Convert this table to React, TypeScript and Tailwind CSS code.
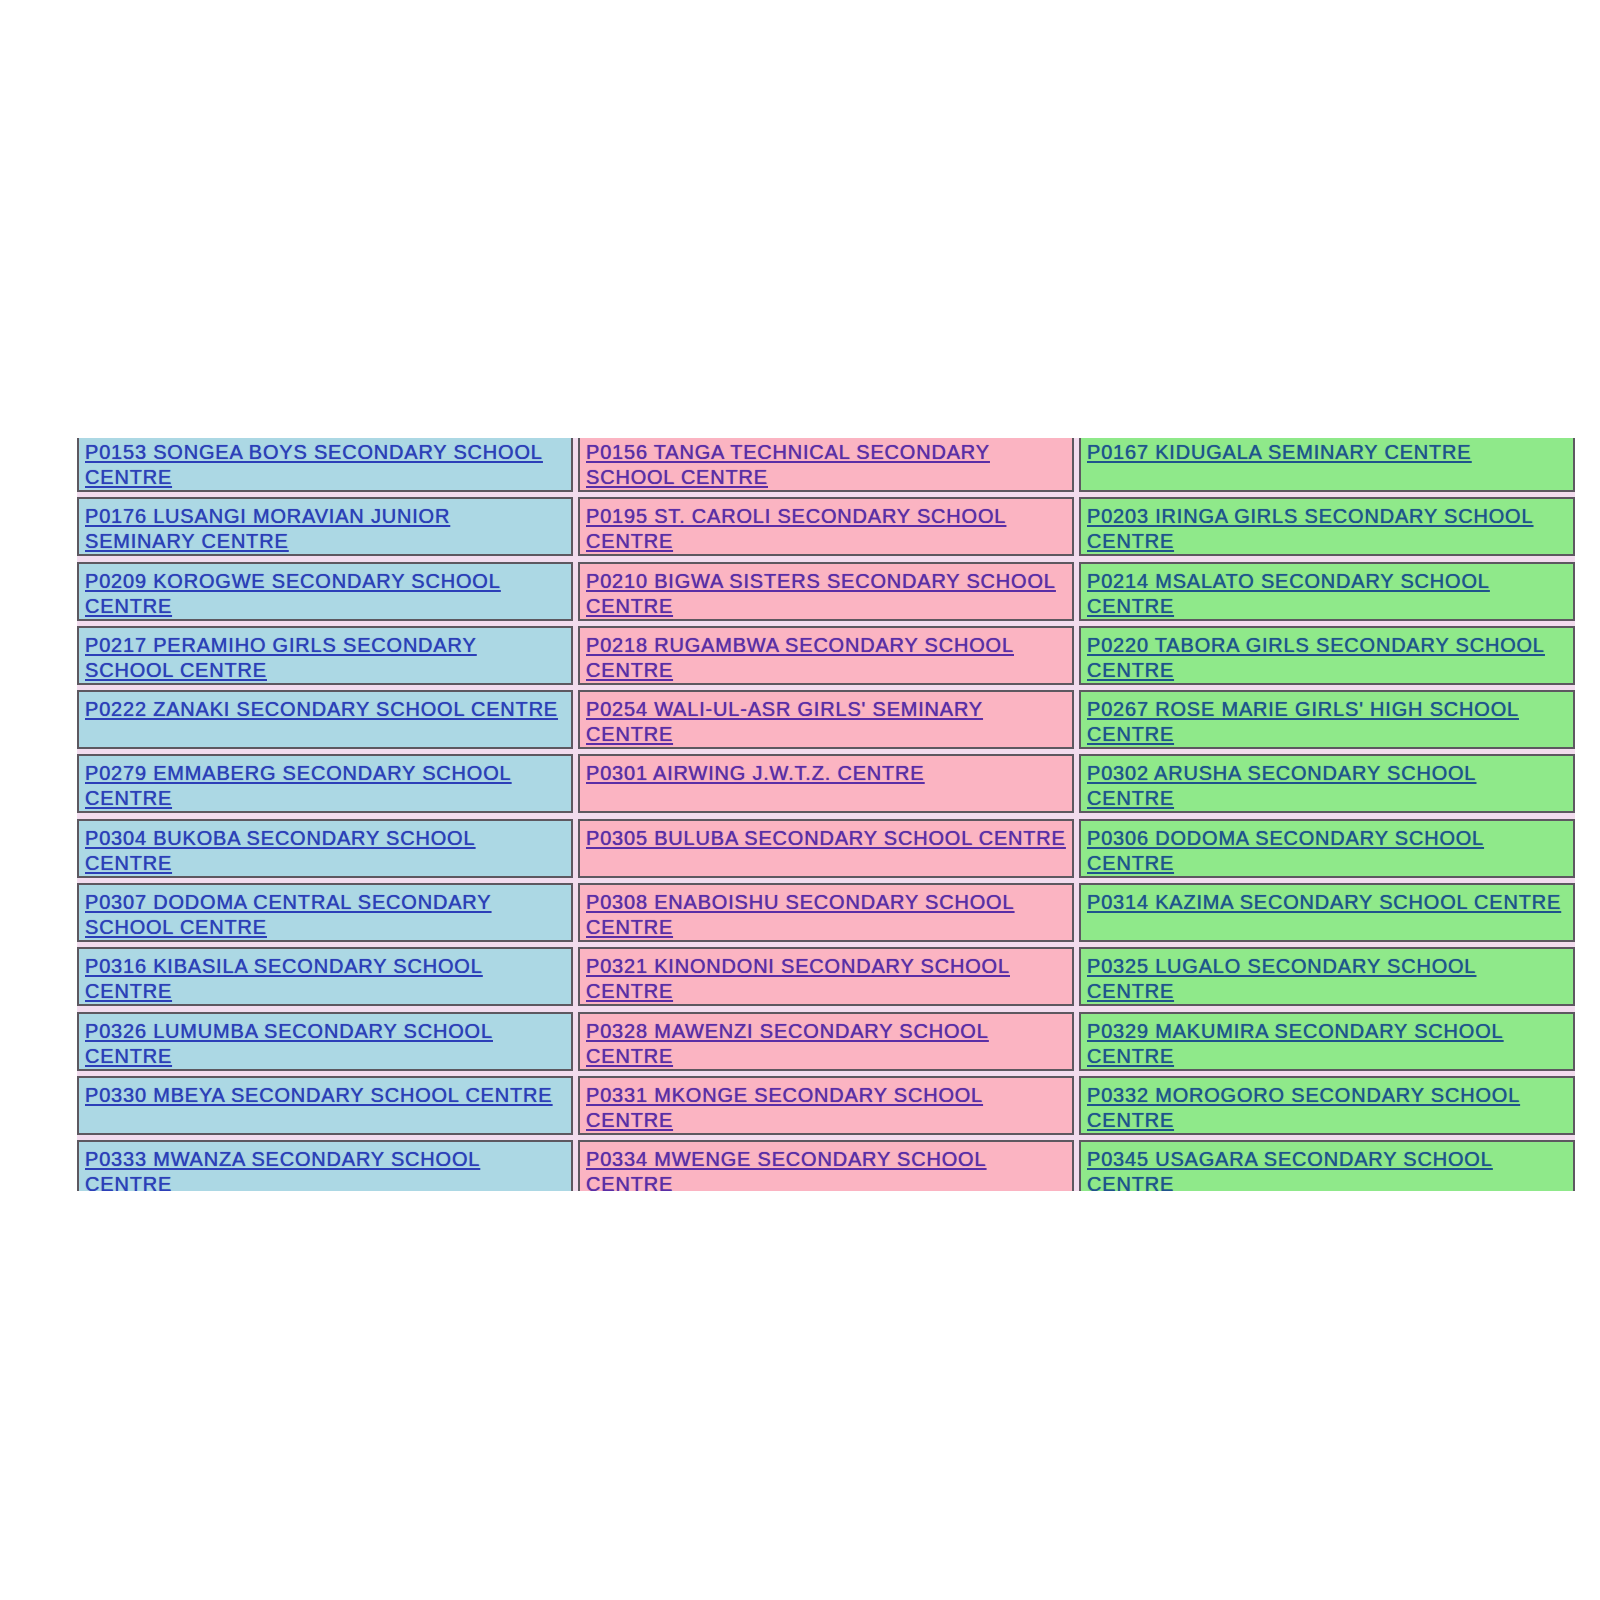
const rows: string[][][] = [
  [["P0153 SONGEA BOYS SECONDARY SCHOOL", "CENTRE"], ["P0156 TANGA TECHNICAL SECONDARY", "SCHOOL CENTRE"], ["P0167 KIDUGALA SEMINARY CENTRE"]],
  [["P0176 LUSANGI MORAVIAN JUNIOR", "SEMINARY CENTRE"], ["P0195 ST. CAROLI SECONDARY SCHOOL", "CENTRE"], ["P0203 IRINGA GIRLS SECONDARY SCHOOL", "CENTRE"]],
  [["P0209 KOROGWE SECONDARY SCHOOL", "CENTRE"], ["P0210 BIGWA SISTERS SECONDARY SCHOOL", "CENTRE"], ["P0214 MSALATO SECONDARY SCHOOL", "CENTRE"]],
  [["P0217 PERAMIHO GIRLS SECONDARY", "SCHOOL CENTRE"], ["P0218 RUGAMBWA SECONDARY SCHOOL", "CENTRE"], ["P0220 TABORA GIRLS SECONDARY SCHOOL", "CENTRE"]],
  [["P0222 ZANAKI SECONDARY SCHOOL CENTRE"], ["P0254 WALI-UL-ASR GIRLS' SEMINARY", "CENTRE"], ["P0267 ROSE MARIE GIRLS' HIGH SCHOOL", "CENTRE"]],
  [["P0279 EMMABERG SECONDARY SCHOOL", "CENTRE"], ["P0301 AIRWING J.W.T.Z. CENTRE"], ["P0302 ARUSHA SECONDARY SCHOOL", "CENTRE"]],
  [["P0304 BUKOBA SECONDARY SCHOOL", "CENTRE"], ["P0305 BULUBA SECONDARY SCHOOL CENTRE"], ["P0306 DODOMA SECONDARY SCHOOL", "CENTRE"]],
  [["P0307 DODOMA CENTRAL SECONDARY", "SCHOOL CENTRE"], ["P0308 ENABOISHU SECONDARY SCHOOL", "CENTRE"], ["P0314 KAZIMA SECONDARY SCHOOL CENTRE"]],
  [["P0316 KIBASILA SECONDARY SCHOOL", "CENTRE"], ["P0321 KINONDONI SECONDARY SCHOOL", "CENTRE"], ["P0325 LUGALO SECONDARY SCHOOL", "CENTRE"]],
  [["P0326 LUMUMBA SECONDARY SCHOOL", "CENTRE"], ["P0328 MAWENZI SECONDARY SCHOOL", "CENTRE"], ["P0329 MAKUMIRA SECONDARY SCHOOL", "CENTRE"]],
  [["P0330 MBEYA SECONDARY SCHOOL CENTRE"], ["P0331 MKONGE SECONDARY SCHOOL", "CENTRE"], ["P0332 MOROGORO SECONDARY SCHOOL", "CENTRE"]],
  [["P0333 MWANZA SECONDARY SCHOOL", "CENTRE"], ["P0334 MWENGE SECONDARY SCHOOL", "CENTRE"], ["P0345 USAGARA SECONDARY SCHOOL", "CENTRE"]],
];

// one colour pair per column: cell fill, link text
const columns = [
  { cell: "bg-[#acd8e4]", link: "text-[#2c3fb8]" },
  { cell: "bg-[#fbb4c2]", link: "text-[#5a2ea6]" },
  { cell: "bg-[#8fe98a]", link: "text-[#1f548c]" },
];

function Cell({ lines, col }: { lines: string[]; col: number }) {
  const c = columns[col];
  return (
    <div className={`h-[59px] border-2 border-[#5d5860] pl-[6px] pt-[6px] ${c.cell}`}>
      <a
        href="#"
        className={`whitespace-nowrap text-[20px] leading-[22px] tracking-[0.8px] underline decoration-[2px] underline-offset-[2px] [text-shadow:0_0_0.8px_currentColor] ${c.link}`}
      >
        {lines.map((l, i) => (
          <span key={i}>
            {i > 0 && <br />}
            {l}
          </span>
        ))}
      </a>
    </div>
  );
}

export default function App() {
  return (
    <div className="min-h-[1600px] w-[1600px] bg-white pl-[77px] pt-[438px] font-['Liberation_Sans',Arial,sans-serif]">
      {/* the table is cropped top and bottom, as in the screenshot */}
      <div className="h-[753px] w-[1498px] overflow-hidden">
        <div className="-mt-[5px] grid grid-cols-3 gap-x-[5px] gap-y-[5.3px] bg-[#f2dcee]">
          {rows.map((row, r) =>
            row.map((lines, c) => <Cell key={`${r}-${c}`} lines={lines} col={c} />)
          )}
        </div>
      </div>
    </div>
  );
}
